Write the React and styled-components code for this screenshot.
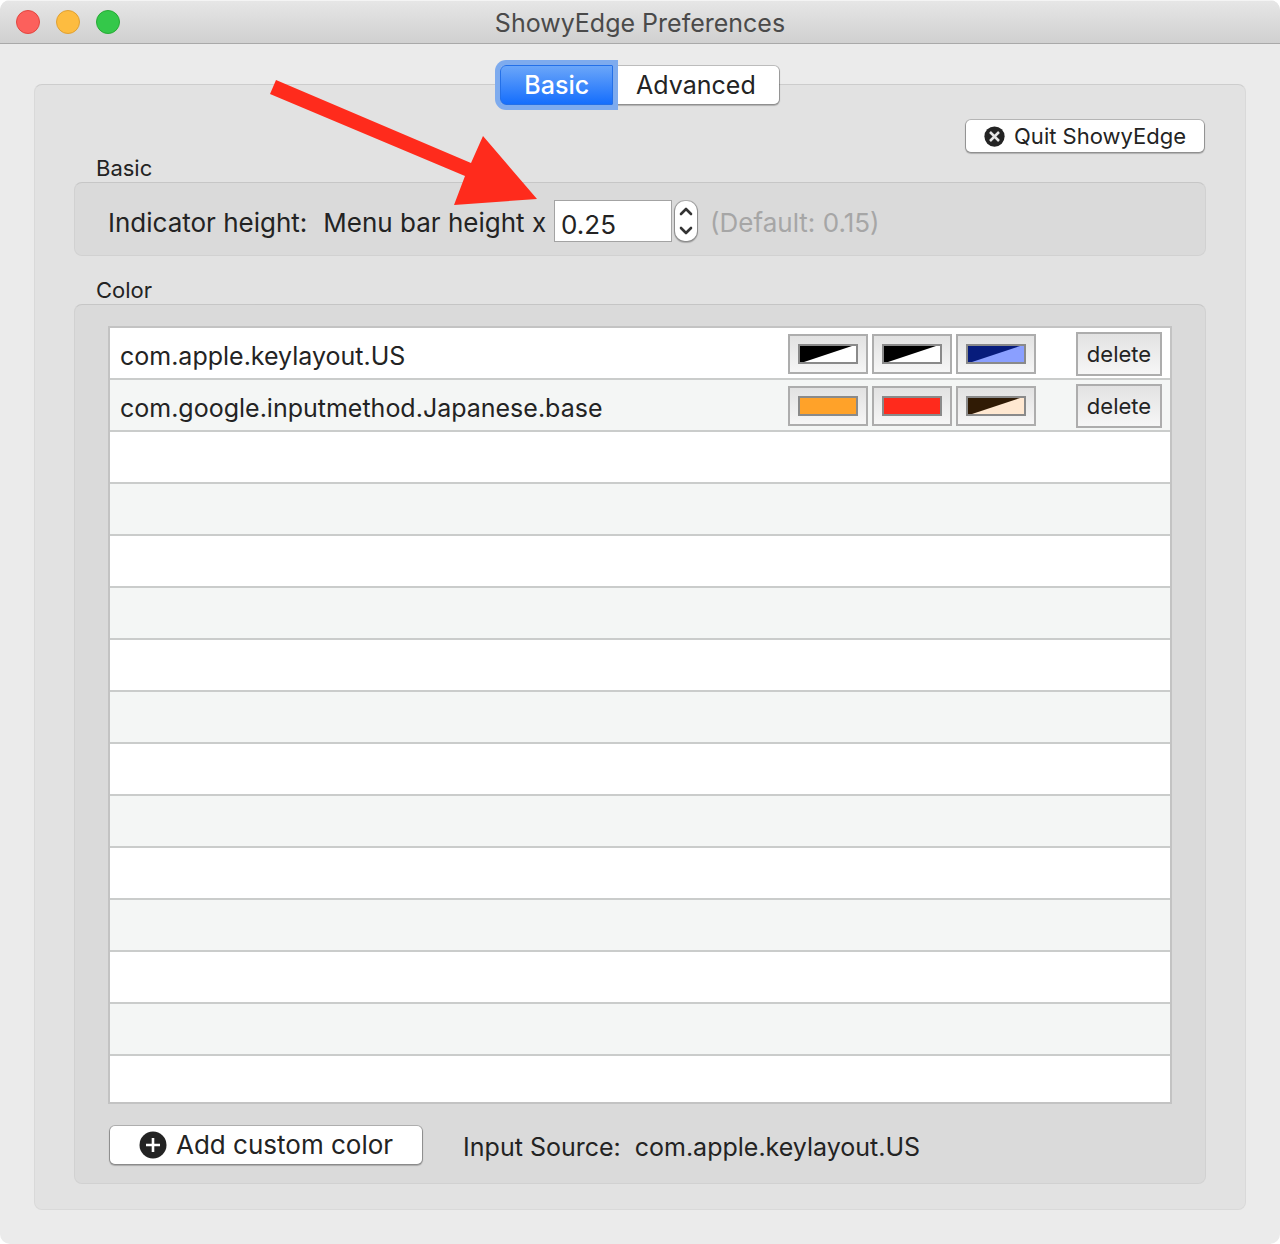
import React, { useState } from "react";
import styled, { createGlobalStyle, css } from "styled-components";

const GlobalStyle = createGlobalStyle`
  *, *::before, *::after { box-sizing: border-box; }
  body {
    margin: 0;
    background: #fff;
    color: #232323;
    font: 400 25px/32px Inter, "Liberation Sans", sans-serif;
  }
  button, input { font: inherit; color: inherit; margin: 0; }
`;

const Window = styled.div`
  position: relative;
  display: flex;
  flex-direction: column;
  min-height: 100vh;
  background: #ebebeb;
  border-radius: 10px;
  overflow: hidden;
`;

const TitleBar = styled.header`
  display: grid;
  grid-template-columns: 1fr auto 1fr;
  align-items: center;
  height: 44px;
  padding: 0 16px;
  background: linear-gradient(#e6e6e6, #d0d0d0);
  border-top: 1px solid #f4f4f4;
  border-bottom: 1px solid #a9a9a9;
`;

const Lights = styled.div`
  display: flex;
  gap: 16px;
`;

const Light = styled.button`
  width: 24px;
  height: 24px;
  padding: 0;
  border: 1px solid ${(p) => p.$edge};
  border-radius: 50%;
  background: ${(p) => p.$fill};
`;

const Title = styled.h1`
  margin: 0;
  padding-top: 2px;
  font-size: 25px;
  font-weight: 400;
  color: #4a4a4a;
`;

const Content = styled.main`
  display: flex;
  flex: 1;
  flex-direction: column;
  padding: 21px 34px 34px;
`;

const Tabs = styled.div`
  z-index: 1;
  display: flex;
  align-self: center;
  margin-bottom: -21px;
`;

const whiteControl = css`
  border: 1px solid rgba(0, 0, 0, 0.18);
  background: #fff padding-box;
  box-shadow: 0 1px 1px rgba(0, 0, 0, 0.22);
`;

const Tab = styled.button`
  height: 40px;
  padding: 0 23px;
  ${whiteControl}
  border-radius: 0 6px 6px 0;
  ${(p) =>
    p.$active
      ? css`
          z-index: 1;
          color: #fff;
          font-weight: 500;
          background: linear-gradient(#6ba6f9, #156efd);
          border: 1px solid #2470e8;
          border-radius: 6px 0 0 6px;
          box-shadow: 0 0 0 5px #7eabee;
        `
      : css`
          border-left: 0;
        `}
`;

const box = css`
  border: 1px solid rgba(0, 0, 0, 0.04);
  border-top-color: rgba(0, 0, 0, 0.09);
  border-radius: 8px;
`;

const Panel = styled.div`
  ${box}
  display: flex;
  flex: 1;
  flex-direction: column;
  padding: 34px 39px 25px;
  background-color: #e2e2e2;
`;

const PushButton = styled.button`
  ${whiteControl}
  display: flex;
  align-items: center;
  justify-content: center;
  gap: 9px;
  border-radius: 6px;
  ${(p) =>
    p.$small
      ? css`
          align-self: flex-end;
          height: 34px;
          margin: 0 1px 1px 0;
          padding: 0 18px;
          font-size: 22px;
        `
      : css`
          height: 40px;
          padding: 0 29px;
          font-size: 26px;
        `}
`;

const Heading = styled.h2`
  margin: ${(p) => (p.$spaced ? 20 : 0)}px 22px 0;
  font-size: 22px;
  line-height: 28px;
  font-weight: 400;
`;

const Group = styled.section`
  ${box}
  background-color: #dadada;
  padding: ${(p) => (p.$tall ? "21px 33px 18px" : "17px 33px 13px")};
`;

const HeightRow = styled.div`
  display: flex;
  align-items: center;
  font-size: 26px;
`;

const HeightLabel = styled.label`
  display: flex;
  gap: 16px;
  margin-right: 8px;
  padding-top: 4px;
`;

const HeightInput = styled.input`
  width: 118px;
  height: 42px;
  padding: 6px 6px 0;
  border: 1px solid #a3a3a3;
  border-radius: 0;
  background: #fff;
  outline: 0;
`;

const Stepper = styled.div`
  ${whiteControl}
  display: flex;
  flex-direction: column;
  width: 24px;
  height: 42px;
  margin: 0 12px 0 2px;
  padding: 1px 0;
  border-radius: 11px;
`;

const StepButton = styled.button`
  display: flex;
  flex: 1;
  align-items: center;
  justify-content: center;
  padding: 0;
  border: 0;
  background: none;
`;

const Hint = styled.span`
  padding-top: 4px;
  color: #a6a6a6;
`;

const Table = styled.table`
  width: 100%;
  border: 2px solid #c3c3c3;
  border-spacing: 0;
  background: #fff;
`;

const Row = styled.tr`
  height: 52px;
  &:nth-child(even) { background: #f4f6f5; }
  &:last-child { height: 46px; }
  &:last-child td { border-bottom: 0; }
`;

const Cell = styled.td`
  padding: 6px 0 0 10px;
  border-bottom: 2px solid #cacccb;
  ${(p) => p.$fit && css`
    width: 1px;
    padding: 2px 0 0;
  `}
`;

const Actions = styled.div`
  display: flex;
  align-items: center;
  padding-right: 8px;
`;

const Wells = styled.div`
  display: flex;
  gap: 4px;
  margin-right: 40px;
`;

const bevel = css`
  border: 2px solid #adadad;
  background: linear-gradient(#e2e2e2, #f6f6f6);
`;

const WellButton = styled.button`
  ${bevel}
  display: flex;
  align-items: center;
  justify-content: center;
  width: 80px;
  height: 40px;
  padding: 0;
`;

const Swatch = styled.svg`
  width: 60px;
  height: 20px;
  border: 2px solid #8a8a8a;
  background: ${(p) => p.$color};
`;

const DeleteButton = styled.button`
  ${bevel}
  width: 86px;
  height: 44px;
  padding: 0;
  font-size: 22px;
`;

const Footer = styled.footer`
  display: flex;
  align-items: center;
  gap: 40px;
  padding: 21px 1px 0;
`;

const Source = styled.p`
  display: flex;
  gap: 14px;
  margin: 0;
  padding-top: 4px;
`;

const Pointer = styled.svg`
  position: absolute;
  z-index: 2;
  top: 80px;
  left: 270px;
  pointer-events: none;
`;

const sources = [
  {
    name: "com.apple.keylayout.US",
    colors: [["#fff", "#000"], ["#fff", "#000"], ["#8a9fff", "#071c7c"]],
  },
  {
    name: "com.google.inputmethod.Japanese.base",
    colors: [["#ffa229"], ["#ff2a1c"], ["#ffe8d1", "#301b05"]],
  },
];

const EMPTY_ROWS = 13;

function ColorWell({ label, color, shade }) {
  return (
    <WellButton type="button" aria-label={label}>
      <Swatch $color={color} viewBox="0 0 56 16" aria-hidden="true">
        {shade && <polygon points="0,0 52,0 4,16 0,16" fill={shade} />}
      </Swatch>
    </WellButton>
  );
}

function DiscIcon({ size, cross }) {
  return (
    <svg width={size} height={size} viewBox="0 0 28 28" aria-hidden="true">
      <circle cx="14" cy="14" r="13.5" fill="#232323" />
      <path
        d={cross ? "M8 8 20 20M20 8 8 20" : "M14 7v14M7 14h14"}
        stroke={cross ? "#e6e6e6" : "#fff"}
        strokeWidth={cross ? 3.4 : 2.6}
      />
    </svg>
  );
}

function Chevron({ down }) {
  return (
    <svg width="14" height="9" viewBox="0 0 14 9" aria-hidden="true">
      <path
        d={down ? "M2 2 7 7 12 2" : "M2 7 7 2 12 7"}
        fill="none"
        stroke="#333"
        strokeWidth="2.6"
        strokeLinecap="round"
        strokeLinejoin="round"
      />
    </svg>
  );
}

export default function App() {
  const [height, setHeight] = useState("0.25");
  const step = (d) => setHeight((h) => (Number(h) + d).toFixed(2));

  return (
    <>
      <GlobalStyle />
      <Window>
        <TitleBar>
          <Lights>
            <Light type="button" aria-label="Close" $fill="#fc605c" $edge="#e2463f" />
            <Light type="button" aria-label="Minimize" $fill="#fdbc40" $edge="#dfa033" />
            <Light type="button" aria-label="Zoom" $fill="#34c84a" $edge="#27aa35" />
          </Lights>
          <Title>ShowyEdge Preferences</Title>
        </TitleBar>
        <Content>
          <Tabs role="tablist">
            <Tab type="button" role="tab" aria-selected="true" $active>Basic</Tab>
            <Tab type="button" role="tab" aria-selected="false">Advanced</Tab>
          </Tabs>
          <Panel role="tabpanel">
            <PushButton type="button" $small>
              <DiscIcon size={21} cross />
              Quit ShowyEdge
            </PushButton>

            <Heading>Basic</Heading>
            <Group>
              <HeightRow>
                <HeightLabel htmlFor="indicator-height">
                  <span>Indicator height:</span>
                  <span>Menu bar height x</span>
                </HeightLabel>
                <HeightInput
                  id="indicator-height"
                  type="text"
                  inputMode="decimal"
                  value={height}
                  onChange={(e) => setHeight(e.target.value)}
                />
                <Stepper>
                  <StepButton type="button" aria-label="Increase" onClick={() => step(0.05)}>
                    <Chevron />
                  </StepButton>
                  <StepButton type="button" aria-label="Decrease" onClick={() => step(-0.05)}>
                    <Chevron down />
                  </StepButton>
                </Stepper>
                <Hint>(Default: 0.15)</Hint>
              </HeightRow>
            </Group>

            <Heading $spaced>Color</Heading>
            <Group $tall>
              <Table>
                <tbody>
                  {sources.map((source) => (
                    <Row key={source.name}>
                      <Cell>{source.name}</Cell>
                      <Cell $fit>
                        <Actions>
                          <Wells>
                            {source.colors.map(([color, shade], i) => (
                              <ColorWell
                                key={i}
                                label={`Color ${i + 1}`}
                                color={color}
                                shade={shade}
                              />
                            ))}
                          </Wells>
                          <DeleteButton type="button">delete</DeleteButton>
                        </Actions>
                      </Cell>
                    </Row>
                  ))}
                  {Array.from({ length: EMPTY_ROWS }, (_, i) => (
                    <Row key={i}>
                      <Cell />
                      <Cell $fit />
                    </Row>
                  ))}
                </tbody>
              </Table>
              <Footer>
                <PushButton type="button">
                  <DiscIcon size={28} />
                  Add custom color
                </PushButton>
                <Source>
                  <span>Input Source:</span>
                  <span>com.apple.keylayout.US</span>
                </Source>
              </Footer>
            </Group>
          </Panel>
        </Content>
        <Pointer width="268" height="126" viewBox="0 0 268 126" aria-hidden="true">
          <polygon
            points="6,0 201,83 213,56 267,119 184,125 195,96 0,14"
            fill="#ff2b1c"
          />
        </Pointer>
      </Window>
    </>
  );
}
